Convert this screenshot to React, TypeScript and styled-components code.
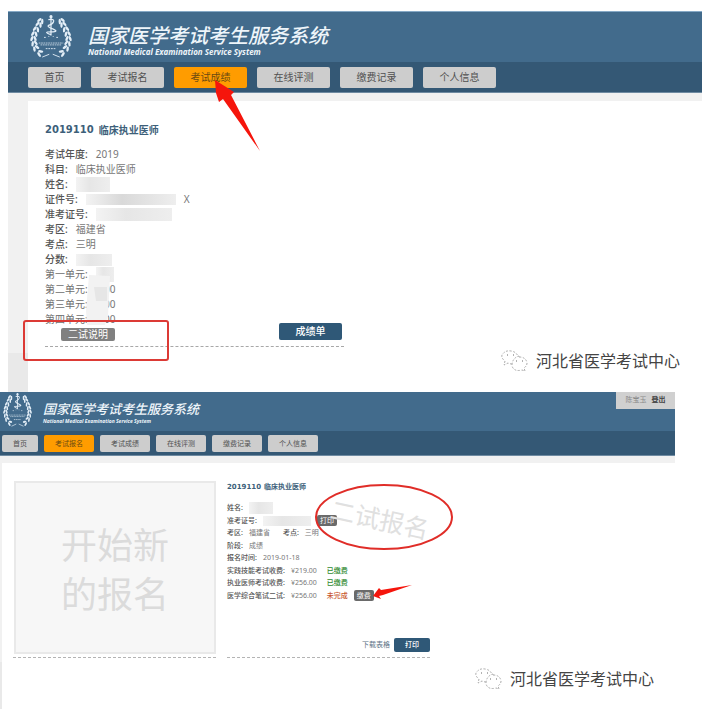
import React from "react";
import styled, { createGlobalStyle, css } from "styled-components";

const Global = createGlobalStyle`
  *, *::before, *::after { box-sizing: border-box; }
  body {
    margin: 0;
    background: #fff;
    color: #666;
    font-family: "Noto Sans", "Noto Sans CJK SC", sans-serif;
  }
  button { font-family: inherit; border: 0; padding: 0; cursor: pointer; }
  h1, h2, p, dl, dd, dt { margin: 0; }
`;

const Page = styled.main`
  display: flex;
  flex-direction: column;
`;

const Screen = styled.section<{ $small?: boolean }>`
  position: relative;
  ${(p) => (p.$small ? "margin: 0 31px 0 0;" : "margin: 11px 4px 0 8px;")}
`;

const Banner = styled.header<{ $small?: boolean }>`
  display: flex;
  align-items: flex-start;
  background: #426b8c;
  ${(p) =>
    p.$small
      ? "height: 39px; gap: 11px; padding-left: 3px;"
      : "height: 51px; gap: 16px; padding: 2px 0 0 22px; border-top: 1px solid #86a9c6;"}
`;

const Emblem = styled.svg<{ $small?: boolean }>`
  display: block;
  flex: none;
  width: ${(p) => (p.$small ? 29 : 42)}px;
  height: ${(p) => (p.$small ? 35 : 44)}px;
`;

const Brand = styled.div<{ $small?: boolean }>`
  display: flex;
  flex-direction: column;
  color: #eef5fa;
  font-style: italic;
  white-space: nowrap;
  padding-top: ${(p) => (p.$small ? 9 : 10)}px;
`;

const BrandName = styled.h1<{ $small?: boolean }>`
  font-weight: 500;
  font-size: ${(p) => (p.$small ? 13 : 20)}px;
  line-height: ${(p) => (p.$small ? 17 : 23)}px;
`;

const BrandSub = styled.p<{ $small?: boolean }>`
  font-weight: 700;
  font-family: "Noto Sans", sans-serif;
  font-size: ${(p) => (p.$small ? 5 : 8)}px;
  line-height: ${(p) => (p.$small ? 7 : 9)}px;
`;

const NavBar = styled.nav<{ $small?: boolean }>`
  display: flex;
  align-items: center;
  background: #345875;
  border-bottom: 1px solid #6f8ba2;
  ${(p) =>
    p.$small
      ? "height: 25px; gap: 6px; padding-left: 2px;"
      : "height: 31px; gap: 10px; padding-left: 20px;"}
`;

const Tab = styled.button<{ $small?: boolean; $short?: boolean; $active?: boolean }>`
  border-radius: 2px;
  color: ${(p) => (p.$active ? "#6b4a12" : "#505050")};
  background: ${(p) => (p.$active ? "#ff9c00" : "#cdcdcd")};
  ${(p) =>
    p.$small
      ? css`
          width: ${p.$short ? 36 : 50}px;
          height: 17px;
          font-size: 7px;
          line-height: 17px;
        `
      : css`
          width: ${p.$short ? 53 : 73}px;
          height: 21px;
          font-size: 10px;
          line-height: 21px;
        `}
`;

const Account = styled.div`
  position: absolute;
  top: 0;
  right: 0;
  display: flex;
  justify-content: center;
  gap: 5px;
  width: 59px;
  height: 17px;
  background: #d0d0d0;
  color: #8a8a8a;
  font-size: 7px;
  line-height: 15px;
`;

const LogoutLink = styled.a`
  color: #444;
  font-weight: 700;
  text-decoration: none;
`;

const Backdrop = styled.div<{ $small?: boolean }>`
  ${(p) =>
    p.$small
      ? "padding: 7px 0 0 2px; background: linear-gradient(#f1f1f1 206px, #e9e9e9 206px);"
      : "padding: 8px 0 0 20px; background: linear-gradient(#f1f1f1 260px, #e9e9e9 260px);"}
`;

const Panel = styled.div<{ $small?: boolean }>`
  background: #fff;
  ${(p) =>
    p.$small
      ? "display: flex; align-items: flex-start; gap: 11px; padding: 18px 0 0 11px; min-height: 246px;"
      : "padding: 20px 0 0 17px; min-height: 291px;"}
`;

const Result = styled.article`
  display: flex;
  flex-direction: column;
  width: 299px;
  border-bottom: 1px dashed #a8a8a8;
`;

const Title = styled.h2<{ $small?: boolean }>`
  display: flex;
  font-weight: 700;
  color: #3d5f7a;
  white-space: nowrap;
  ${(p) =>
    p.$small
      ? "gap: 3px; font-size: 7px; line-height: 12px;"
      : "gap: 5px; font-size: 10px; line-height: 18px;"}
`;

const Code = styled.span`
  font-family: "DejaVu Sans", sans-serif;
`;

const Rows = styled.dl<{ $small?: boolean }>`
  display: grid;
  ${(p) =>
    p.$small
      ? "margin-top: 9px; min-height: 100px; grid-template-rows: repeat(8, 1fr); font-size: 7px; line-height: 12px;"
      : "margin-top: 8px; grid-auto-rows: 15px; font-size: 10px; line-height: 15px;"}
`;

const Row = styled.div<{ $small?: boolean }>`
  display: flex;
  align-items: center;
  white-space: nowrap;
  gap: ${(p) => (p.$small ? 6 : 8)}px;
`;

const Label = styled.dt<{ $light?: boolean }>`
  font-weight: ${(p) => (p.$light ? 400 : 500)};
  color: ${(p) => (p.$light ? "#6e6e6e" : "#555")};
`;

const Value = styled.dd<{ $tone?: "ok" | "due" }>`
  min-width: ${(p) => (p.$tone ? 20 : 0)}px;
  margin-left: ${(p) => (p.$tone ? 4 : 0)}px;
  font-weight: ${(p) => (p.$tone ? 500 : 400)};
  color: ${(p) => (p.$tone === "ok" ? "#2f8a2f" : p.$tone === "due" ? "#c8552f" : "#777")};
`;

const Mask = styled.span<{ $w: number; $h: number; $shade?: string }>`
  display: block;
  width: ${(p) => p.$w}px;
  height: ${(p) => p.$h}px;
  background: linear-gradient(90deg, #f3f3f3, ${(p) => p.$shade || "#e6e6e6"} 40%, #eee);
`;

const Actions = styled.div<{ $small?: boolean }>`
  display: flex;
  ${(p) =>
    p.$small
      ? "justify-content: flex-end; align-items: center; gap: 4px; margin-top: 36px; padding-bottom: 5px;"
      : "justify-content: space-between; align-items: flex-start; margin-top: -4px; padding: 0 2px 5px 16px;"}
`;

const NoteButton = styled.button<{ $small?: boolean }>`
  border-radius: 2px;
  background: #808080;
  color: #fff;
  ${(p) =>
    p.$small
      ? "width: 20px; height: 11px; font-size: 7px; line-height: 11px; background: #6a6a6a;"
      : "width: 54px; height: 13px; margin-top: 5px; font-size: 10px; line-height: 13px;"}
`;

const MainButton = styled.button<{ $small?: boolean }>`
  border-radius: 2px;
  background: #2f5877;
  color: #fff;
  font-weight: 500;
  ${(p) =>
    p.$small
      ? "width: 36px; height: 14px; font-size: 7px; line-height: 14px;"
      : "width: 63px; height: 17px; font-size: 10px; line-height: 17px;"}
`;

const DownloadLink = styled.a`
  color: #5d7486;
  font-size: 7px;
  line-height: 14px;
  text-decoration: none;
`;

const Column = styled.div`
  width: 203px;
  display: flex;
  flex-direction: column;
  border-bottom: 1px dashed #b4b4b4;
`;

const NewEntry = styled.button`
  display: flex;
  align-items: center;
  justify-content: center;
  height: 173px;
  margin: 0 0 3px 1px;
  border: 2px solid #e9e9e9;
  background: #f7f7f7;
  color: #dbdbdb;
  font-family: "Noto Sans CJK SC", sans-serif;
  font-weight: 400;
  font-size: 36px;
  line-height: 49px;
`;

const Stamp = styled.span`
  position: absolute;
  left: 330px;
  top: 110px;
  transform: rotate(12deg);
  color: #e0e0e0;
  font-family: "Noto Sans CJK SC", sans-serif;
  font-weight: 400;
  font-size: 25px;
  line-height: 32px;
  white-space: nowrap;
`;

const Marks = styled.svg`
  position: absolute;
  top: 0;
  left: 0;
  overflow: visible;
  pointer-events: none;
`;

const Source = styled.div<{ $small?: boolean }>`
  position: absolute;
  display: flex;
  align-items: center;
  gap: 8px;
  color: #444;
  font-size: 16px;
  line-height: 24px;
  white-space: nowrap;
  ${(p) => (p.$small ? "left: 474px; top: 275px;" : "left: 492px; top: 338px;")}
`;

const leaves = [
  [12, 8, -64], [10, 12, -68], [7, 17, -72], [5, 22, -80], [4, 27, -92],
  [5, 32, -106], [7, 37, -124], [12, 42, -150],
];

function EmblemMark({ small }: { small?: boolean }) {
  const half = leaves.map(([x, y, a]) => (
    <g key={y} transform={`translate(${x} ${y}) rotate(${a})`}>
      <ellipse cx="0" cy="-2" rx="3" ry="1.4" transform="rotate(24)" />
      <ellipse cx="0" cy="2" rx="3" ry="1.4" transform="rotate(-24)" />
    </g>
  ));
  return (
    <Emblem $small={small} viewBox="0 0 48 47" preserveAspectRatio="none" aria-hidden="true">
      <g fill="#e3eef7">
        <g>{half}</g>
        <g transform="translate(48 0) scale(-1 1)">{half}</g>
        <circle cx="24" cy="3" r="1.8" />
      </g>
      <g fill="none" stroke="#e3eef7">
        <path d="M24 2V23" strokeWidth="1.4" />
        <path d="M21 6q7-1 6 2t-5 4 4 4-2 3 0 3" strokeWidth="1.4" />
        <path d="M16 25h2m3-1h1m4 0h1m3 1h2M14 46l8-3m12 3l-8-3" strokeWidth="1" />
        <path d="M10 31h28M12 33h24" strokeWidth="1" strokeDasharray="2 .7" opacity=".8" />
        <path d="M18 37h12" strokeWidth="1" strokeDasharray="2 1" />
      </g>
    </Emblem>
  );
}

function ChatIcon() {
  return (
    <svg width="28" height="24" viewBox="0 0 28 24" fill="none" stroke="#aaa" strokeWidth="1" strokeDasharray="2 1.6" aria-hidden="true">
      <path d="M12 15q-2 0-4-1l-4 2 1-4Q1 9 2 6q3-5 9-4 6 1 7 6" />
      <path d="M19 8q7 0 8 6 0 3-3 5l1 3-3-1q-8 2-10-4 0-8 7-10z" />
      <path d="M7 6h1m5 0h1m2 6h1m5 0h1" stroke="#666" strokeDasharray="none" />
    </svg>
  );
}

const tabs = ["首页", "考试报名", "考试成绩", "在线评测", "缴费记录", "个人信息"];

function Header({ small, active }: { small?: boolean; active: number }) {
  return (
    <>
      <Banner $small={small}>
        <EmblemMark small={small} />
        <Brand $small={small}>
          <BrandName $small={small}>国家医学考试考生服务系统</BrandName>
          <BrandSub $small={small}>National Medical Examination Service System</BrandSub>
        </Brand>
      </Banner>
      <NavBar $small={small}>
        {tabs.map((t, i) => (
          <Tab key={t} type="button" $small={small} $short={i === 0} $active={i === active}>
            {t}
          </Tab>
        ))}
      </NavBar>
    </>
  );
}

function SourceTag({ small }: { small?: boolean }) {
  return (
    <Source $small={small}>
      <ChatIcon />
      <span>河北省医学考试中心</span>
    </Source>
  );
}

function ScoreScreen() {
  return (
    <Screen>
      <Header active={2} />
      <Backdrop>
        <Panel>
          <Result>
            <Title><Code>2019110</Code><span>临床执业医师</span></Title>
            <Rows>
              <Row><Label>考试年度:</Label><Value>2019</Value></Row>
              <Row><Label>科目:</Label><Value>临床执业医师</Value></Row>
              <Row><Label>姓名:</Label><Value><Mask $w={34} $h={15} /></Value></Row>
              <Row><Label>证件号:</Label><Value><Mask $w={90} $h={11} $shade="#d9d9d9" /></Value><Value>X</Value></Row>
              <Row><Label>准考证号:</Label><Value><Mask $w={76} $h={13} /></Value></Row>
              <Row><Label>考区:</Label><Value>福建省</Value></Row>
              <Row><Label>考点:</Label><Value>三明</Value></Row>
              <Row><Label>分数:</Label><Value><Mask $w={36} $h={12} /></Value></Row>
              <Row><Label $light>第一单元:</Label><Value><Mask $w={18} $h={15} /></Value></Row>
              <Row><Label $light>第二单元:</Label><Value>0.00</Value></Row>
              <Row><Label $light>第三单元:</Label><Value>0.00</Value></Row>
              <Row><Label $light>第四单元:</Label><Value>0.00</Value></Row>
            </Rows>
            <Actions>
              <NoteButton type="button">二试说明</NoteButton>
              <MainButton type="button">成绩单</MainButton>
            </Actions>
          </Result>
        </Panel>
      </Backdrop>
      <Marks width="1" height="1" aria-hidden="true">
        <path d="M81 264l21 1-2 40-3 9H79l-1-14z" fill="#f2f2f2" />
        <path d="M86 276h13v14H88z" fill="#e6e6e6" />
        <rect x="16" y="310" width="144" height="39" rx="2" fill="none" stroke="#dc3a35" strokeWidth="2" />
        <path d="M207 69l19 12-3 3 29 56-37-52-4 3-3-9z" fill="#f5150c" />
      </Marks>
      <SourceTag />
    </Screen>
  );
}

function EntryScreen() {
  return (
    <Screen $small>
      <Header small active={1} />
      <Account><span>陈宝玉</span><LogoutLink href="#logout">登出</LogoutLink></Account>
      <Backdrop $small>
        <Panel $small>
          <Column><NewEntry type="button">开始新<br />的报名</NewEntry></Column>
          <Column>
            <Title $small><Code>2019110</Code><span>临床执业医师</span></Title>
            <Rows $small>
              <Row $small><Label>姓名:</Label><Value><Mask $w={24} $h={12} /></Value></Row>
              <Row $small>
                <Label>准考证号:</Label><Value><Mask $w={48} $h={10} /></Value>
                <NoteButton $small type="button">打印</NoteButton>
              </Row>
              <Row $small><Label>考区:</Label><Value>福建省</Value><Label>&emsp;考点:</Label><Value>三明</Value></Row>
              <Row $small><Label>阶段:</Label><Value>成绩</Value></Row>
              <Row $small><Label>报名时间:</Label><Value>2019-01-18</Value></Row>
              <Row $small><Label>实践技能考试收费:</Label><Value>¥219.00</Value><Value $tone="ok">已缴费</Value></Row>
              <Row $small><Label>执业医师考试收费:</Label><Value>¥256.00</Value><Value $tone="ok">已缴费</Value></Row>
              <Row $small>
                <Label>医学综合笔试二试:</Label><Value>¥256.00</Value><Value $tone="due">未完成</Value>
                <NoteButton $small type="button">缴费</NoteButton>
              </Row>
            </Rows>
            <Actions $small>
              <DownloadLink href="#form">下载表格</DownloadLink>
              <MainButton $small type="button">打印</MainButton>
            </Actions>
          </Column>
        </Panel>
      </Backdrop>
      <Stamp>二试报名</Stamp>
      <Marks width="1" height="1" aria-hidden="true">
        <ellipse cx="384" cy="125" rx="68" ry="32" fill="none" stroke="#e02d28" strokeWidth="2" />
        <path d="M373 204l6-8 2 2 31-5-29 10-4 1 2 3z" fill="#f5150c" />
      </Marks>
      <SourceTag small />
    </Screen>
  );
}

export default function App() {
  return (
    <Page>
      <Global />
      <ScoreScreen />
      <EntryScreen />
    </Page>
  );
}
